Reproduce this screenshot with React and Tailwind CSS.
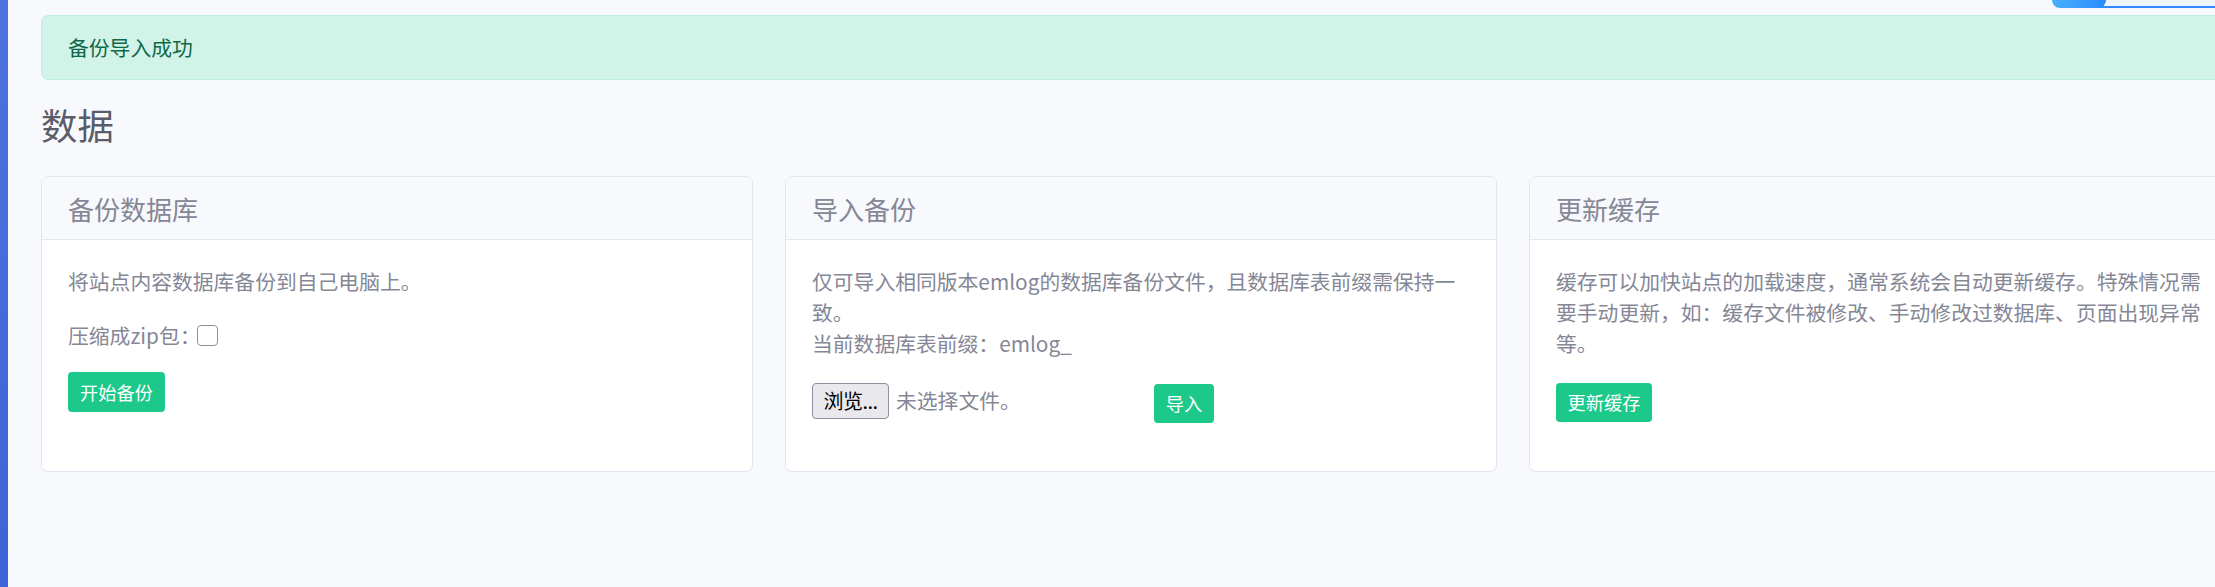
export default function App() {
  return (
    <div className="relative flex min-h-[587px] h-[587px] w-[2215px] overflow-hidden bg-[#f8f9fc] font-['Noto_Sans_CJK_SC','Noto_Sans',sans-serif] text-[20.8px] leading-[31.2px] text-[#858796]">
      {/* sidebar edge */}
      <div className="w-[8px] shrink-0 bg-gradient-to-b from-[#4e73df] to-[#3d63d6]" />

      {/* floating search bar, scrolled mostly out of view */}
      <div className="absolute top-0 left-[2052px] h-[8px] w-[163px]">
        <div className="absolute top-0 left-[40px] right-0 h-[8px] border-b-2 border-[#2d8cff] bg-[#eef5ff]" />
        <div className="absolute top-0 left-0 h-[8px] w-[54px] rounded-b-[9px] bg-gradient-to-r from-[#48b0fc] to-[#2a8bff]" />
      </div>

      <div className="w-[2235px] shrink-0 pl-[33px] pt-[15px]">
        <div className="h-[65px] rounded-[7px] border border-[#bff0de] bg-[#d2f4e8] px-[26px] py-[15.6px] text-[#0f6848]">
          备份导入成功
        </div>

        <h3 className="mt-[21px] mb-[31px] h-[44px] text-[36.4px] leading-[46px] text-[#5a5c69]">
          数据
        </h3>

        <div className="flex gap-x-[32px]">
          <Card title="备份数据库">
            <p className="mb-[21px]">将站点内容数据库备份到自己电脑上。</p>
            <div className="flex h-[34px] items-center">
              <span>压缩成zip包：</span>
              <span className="ml-[-3px] h-[21px] w-[21px] rounded-[4px] border border-[#8f8f9d] bg-white" />
            </div>
            <button className="mt-[20px] h-[40px] w-[97px] rounded-[4px] bg-[#1cc88a] text-[18.2px] text-white">
              开始备份
            </button>
          </Card>

          <Card title="导入备份">
            <p className="whitespace-nowrap">
              仅可导入相同版本emlog的数据库备份文件，且数据库表前缀需保持一
              <br />
              致。
              <br />
              当前数据库表前缀：emlog_
            </p>
            <div className="mt-[21px] flex items-start">
              <div className="flex w-[342px] items-center">
                <span className="mt-[2px] flex h-[36px] w-[77px] items-center justify-center rounded-[4px] border border-[#8f8f9d] bg-[#e9e9ed] text-[20px] tracking-[-0.5px] text-black">
                  浏览...
                </span>
                <span className="ml-[7px] mt-[2px]">未选择文件。</span>
              </div>
              <button className="mt-[3px] h-[39px] w-[60px] rounded-[4px] bg-[#1cc88a] text-[18.2px] text-white">
                导入
              </button>
            </div>
          </Card>

          <Card title="更新缓存">
            <p className="whitespace-nowrap">
              缓存可以加快站点的加载速度，通常系统会自动更新缓存。特殊情况需
              <br />
              要手动更新，如：缓存文件被修改、手动修改过数据库、页面出现异常
              <br />
              等。
            </p>
            <button className="mt-[23px] h-[39px] w-[96px] rounded-[4px] bg-[#1cc88a] text-[18.2px] text-white">
              更新缓存
            </button>
          </Card>
        </div>
      </div>
    </div>
  );
}

function Card({ title, children }) {
  return (
    <div className="h-[296px] w-[712px] shrink-0 overflow-hidden rounded-[7px] border border-[#e3e6f0] bg-white">
      <div className="h-[63px] border-b border-[#e3e6f0] bg-[#f8f9fc] px-[26px] py-[15.6px]">
        <h5 className="text-[26px] leading-[31.2px] text-[#858796]">{title}</h5>
      </div>
      <div className="px-[26px] pt-[26px]">{children}</div>
    </div>
  );
}
